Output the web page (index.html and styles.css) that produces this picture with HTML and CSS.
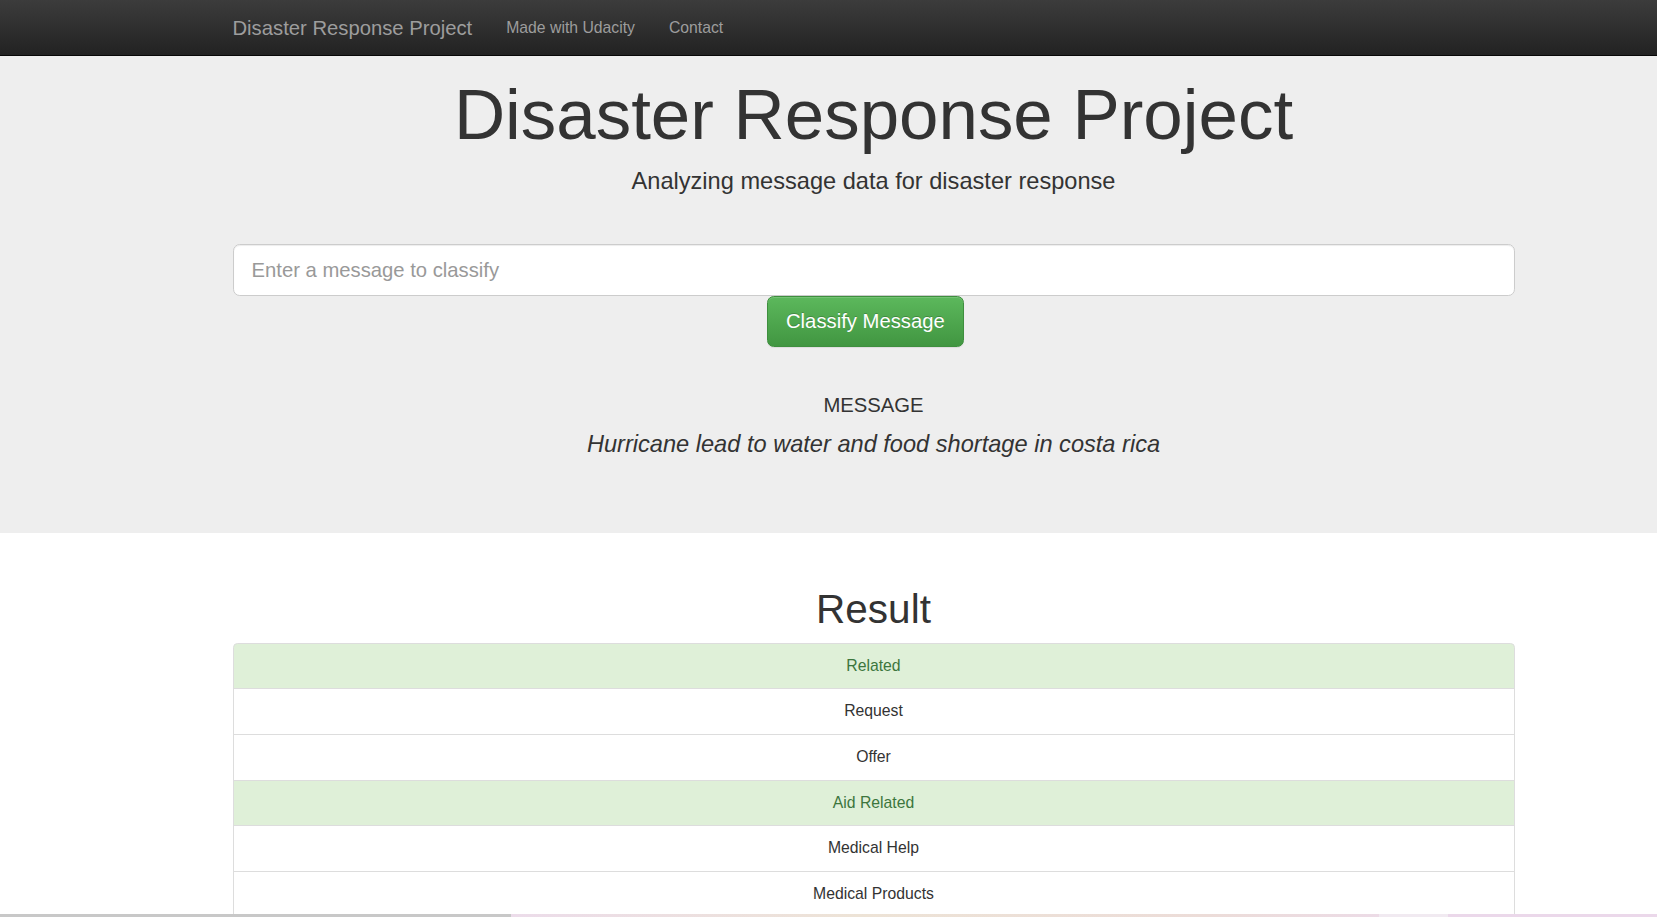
FILE: index.html
```html
<!DOCTYPE html>
<html lang="en">
<head>
<meta charset="utf-8">
<title>Disaster Response Project</title>
<link rel="stylesheet" href="styles.css">
</head>
<body>
<nav class="navbar">
  <div class="container nav-inner">
    <a class="brand" href="#">Disaster Response Project</a>
    <ul class="nav">
      <li><a href="#">Made with Udacity</a></li>
      <li><a href="#">Contact</a></li>
    </ul>
  </div>
</nav>

<section class="jumbotron">
  <div class="container">
    <h1 class="title">Disaster Response Project</h1>
    <p class="lead">Analyzing message data for disaster response</p>
    <form class="classify-form">
      <input class="input-lg" type="text" name="query" placeholder="Enter a message to classify">
      <div class="btn-row">
        <button type="button" class="btn-success">Classify Message</button>
      </div>
    </form>
    <div class="message-block">
      <h3 class="msg-label">MESSAGE</h3>
      <p class="msg-text">Hurricane lead to water and food shortage in costa rica</p>
    </div>
  </div>
</section>

<main class="container results">
  <h1 class="result-title">Result</h1>
  <ul class="list-group">
    <li class="list-item success">Related</li>
    <li class="list-item">Request</li>
    <li class="list-item">Offer</li>
    <li class="list-item success">Aid Related</li>
    <li class="list-item">Medical Help</li>
    <li class="list-item">Medical Products</li>
  </ul>
</main>

<div class="bottom-strip"><span class="strip-gray"></span><span class="strip-color"></span><span class="strip-light"></span><span class="strip-pink"></span></div>
</body>
</html>
```

FILE: styles.css
```css
* { box-sizing: border-box; }

html, body {
  margin: 0;
  padding: 0;
  height: 100%;
  overflow: hidden;
}

body {
  font-family: "Liberation Sans", Arial, Helvetica, sans-serif;
  font-size: 15.75px;
  line-height: 22.5px;
  color: #333;
  background: #fff;
}

.container {
  width: 1282px;
  margin-left: 232.5px;
}

/* Navbar */
.navbar {
  height: 56px;
  background: linear-gradient(to bottom, #3c3c3c 0%, #222 100%);
  border-bottom: 1px solid #080808;
}

.nav-inner {
  display: flex;
  align-items: center;
  height: 55px;
  padding-top: 2px;
}

.brand {
  font-size: 20.25px;
  line-height: 22.5px;
  color: #9d9d9d;
  text-decoration: none;
  padding-right: 17px;
}

.nav {
  display: flex;
  list-style: none;
  margin: 0;
  padding: 0;
}

.nav a {
  display: block;
  padding: 0 17px;
  font-size: 15.75px;
  line-height: 22.5px;
  color: #9d9d9d;
  text-decoration: none;
}

/* Jumbotron */
.jumbotron {
  background: #eee;
  padding: 20px 0 71.5px;
}

.title {
  margin: 0;
  text-align: center;
  font-weight: 400;
  font-size: 70.9px;
  line-height: 78px;
  color: #333;
}

.lead {
  margin: 11px 0 0;
  text-align: center;
  font-size: 23.6px;
  line-height: 33px;
  font-weight: 300;
  color: #333;
}

.classify-form {
  margin-top: 46px;
}

.input-lg {
  display: block;
  width: 100%;
  height: 52px;
  padding: 10px 18px;
  font-family: inherit;
  font-size: 20.25px;
  line-height: 30px;
  color: #555;
  background: #fff;
  border: 1px solid #ccc;
  border-radius: 6.75px;
  box-shadow: inset 0 1px 1px rgba(0, 0, 0, .075);
  outline: none;
}

.input-lg::placeholder {
  color: #999;
}

.btn-row {
  padding-left: 534.5px;
}

.btn-success {
  display: inline-block;
  height: 51px;
  padding: 0 18px;
  font-family: inherit;
  font-size: 20.25px;
  line-height: 49px;
  color: #fff;
  background: linear-gradient(to bottom, #5cb85c 0%, #419641 100%);
  border: 1px solid #3e8f3e;
  border-radius: 6.75px;
  text-shadow: 0 -1px 0 rgba(0, 0, 0, .2);
  box-shadow: inset 0 1px 0 rgba(255, 255, 255, .15), 0 1px 1px rgba(0, 0, 0, .075);
  cursor: pointer;
}

.message-block {
  margin-top: 46.5px;
  text-align: center;
}

.msg-label {
  margin: 0;
  font-size: 20.25px;
  line-height: 22.5px;
  font-weight: 400;
  color: #333;
}

.msg-text {
  margin: 12px 0 0;
  font-size: 23.6px;
  line-height: 33px;
  font-style: italic;
  color: #333;
}

/* Results */
.result-title {
  margin: 54px 0 11.5px;
  text-align: center;
  font-weight: 500;
  font-size: 40.5px;
  line-height: 44.5px;
  color: #333;
}

.list-group {
  list-style: none;
  margin: 0;
  padding: 0;
}

.list-item {
  padding: 11.1px 17px;
  margin-bottom: -1px;
  text-align: center;
  font-size: 15.75px;
  line-height: 22.5px;
  color: #333;
  background: #fff;
  border: 1px solid #ddd;
}

.list-item:first-child {
  border-top-left-radius: 4.5px;
  border-top-right-radius: 4.5px;
}

.list-item.success {
  color: #3c763d;
  background: #dff0d8;
}

/* strip at the bottom edge of the window */
.bottom-strip {
  position: fixed;
  left: 0;
  right: 0;
  bottom: 0;
  height: 3px;
  display: flex;
}

.strip-gray { width: 511px; background: #c8c8c8; }
.strip-color { width: 868px; background: linear-gradient(to right, #ecdcea, #ede3d6 40%, #ecdcd8 80%, #ecdbe6); }
.strip-light { width: 69px; background: #f1eaf1; }
.strip-pink { flex: 1; background: #ebd8ea; }
```
